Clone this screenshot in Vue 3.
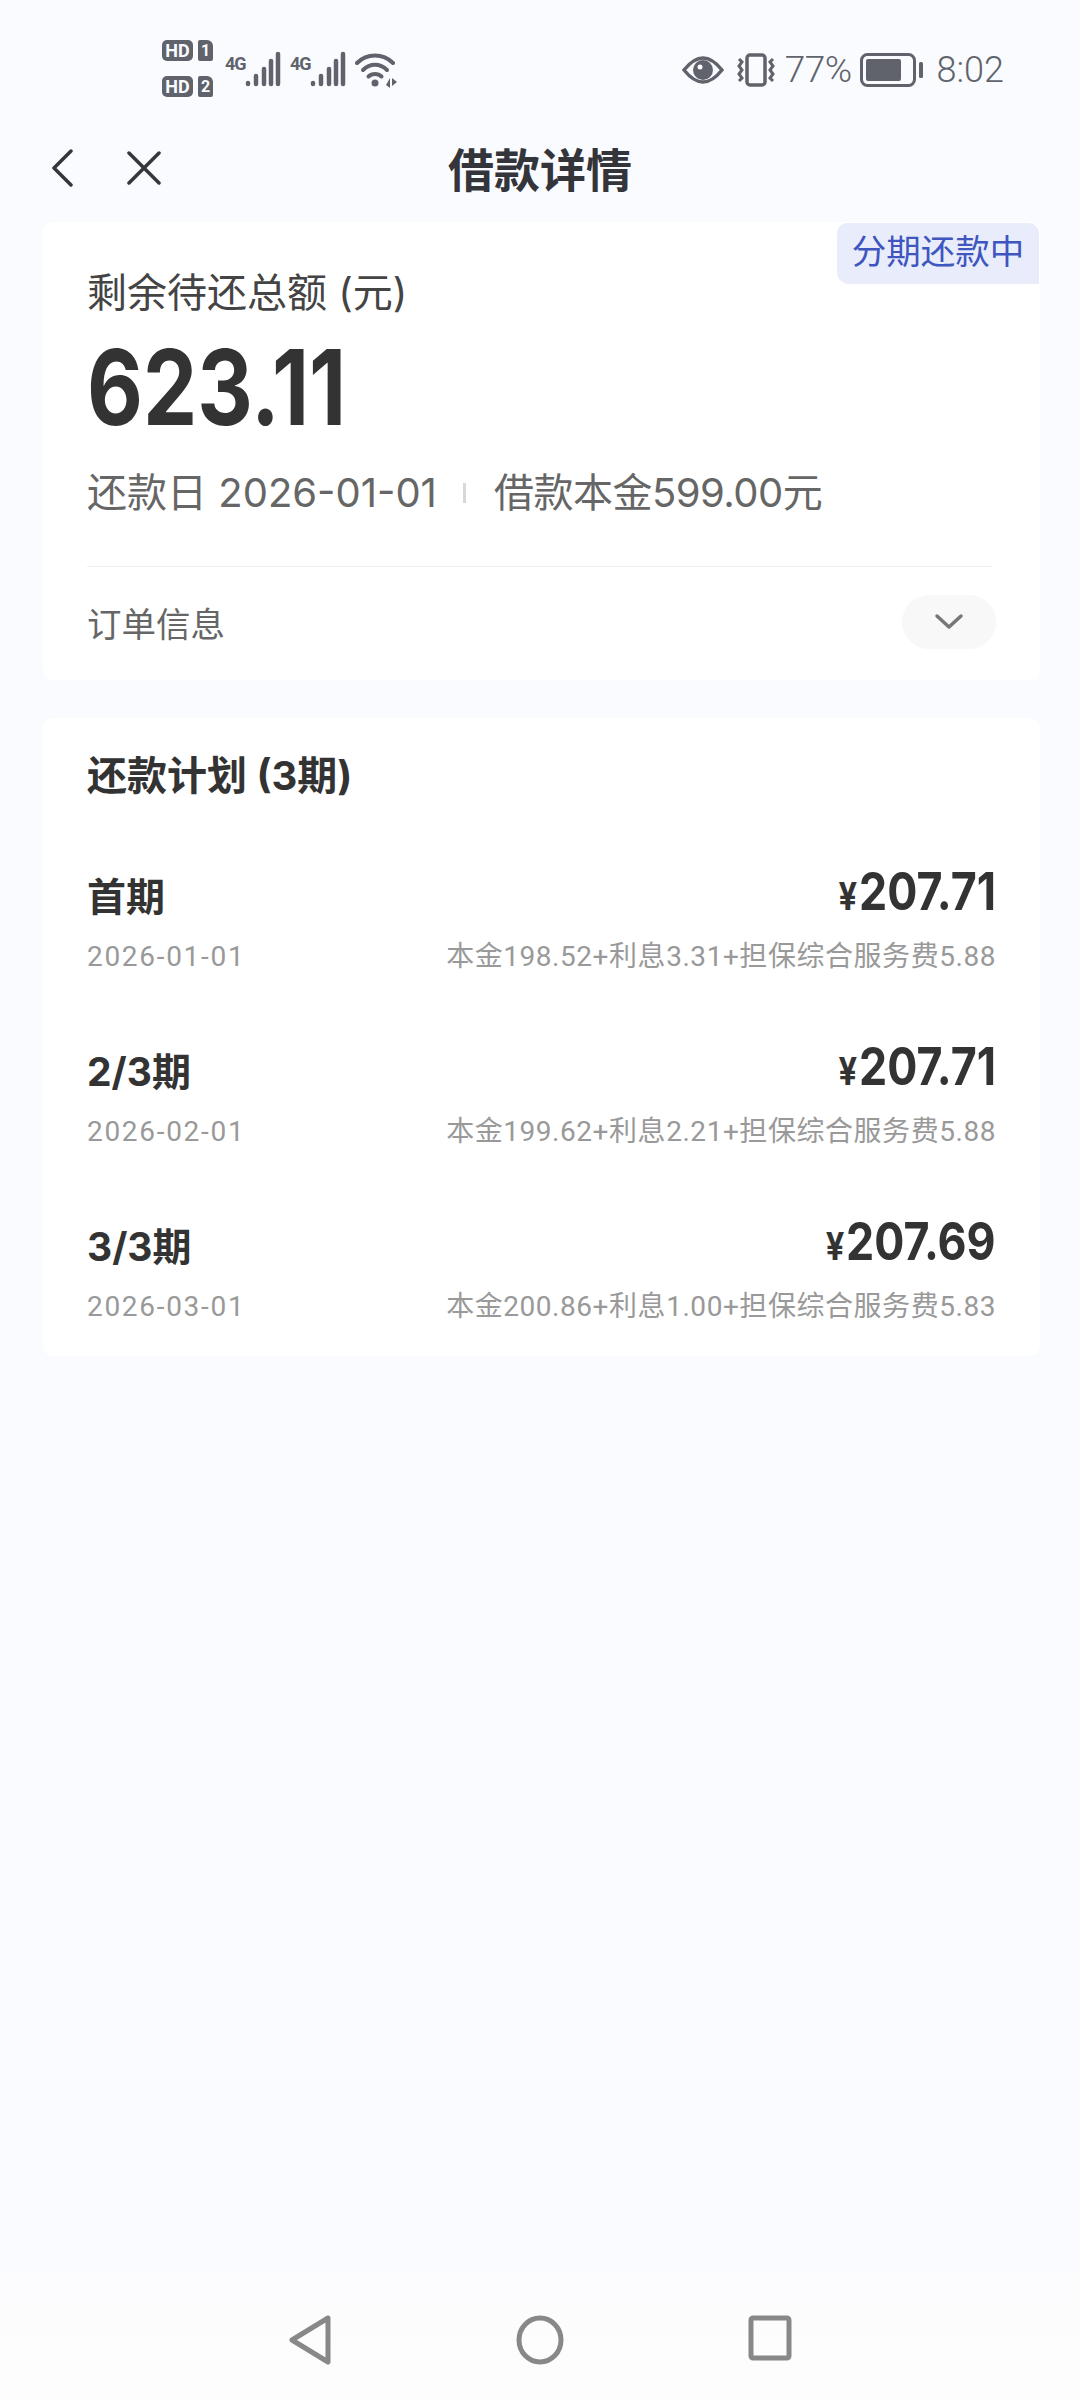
<template>
  <div class="page">
    <div class="status-bar">
      <div class="status-left">
        <div class="sims">
          <div class="sim" v-for="n in [1, 2]" :key="n">
            <span class="hd">HD</span>
            <span class="sim-no">{{ n }}</span>
          </div>
        </div>
        <div class="signal" v-for="n in 2" :key="n">
          <span class="net">4G</span>
          <svg width="36" height="36" viewBox="0 0 36 36">
            <g stroke="#60636b" stroke-linecap="round">
              <path d="M3 33v-1" stroke-width="4.5" />
              <path d="M11 33v-8" stroke-width="4.5" />
              <path d="M19 33v-15" stroke-width="4.5" />
              <path d="M26 33v-23" stroke-width="4.5" />
              <path d="M33 33v-30" stroke-width="4.5" />
            </g>
          </svg>
        </div>
        <svg class="wifi" width="44" height="36" viewBox="0 0 44 36">
          <g fill="none" stroke="#60636b" stroke-width="4" stroke-linecap="round">
            <path d="M2 11C12 1 28 1 38 11" />
            <path d="M8 18C15 11 25 11 32 18" />
            <path d="M13.500 24.500C17 21 23 21 26.500 24.500" />
          </g>
          <circle cx="20" cy="31" r="3.500" fill="#60636b" />
          <path d="M31 33l4-7v10zM37 26l5 4-5 4z" fill="#60636b" />
        </svg>
      </div>
      <div class="status-right">
        <svg width="42" height="28" viewBox="0 0 42 28">
          <path d="M2 14C10 4 16 2 21 2s11 2 19 12c-8 10-14 12-19 12S10 24 2 14z" fill="none" stroke="#60636b" stroke-width="3.500" />
          <circle cx="21" cy="14" r="10" fill="#60636b" />
          <circle cx="18" cy="11" r="2.500" fill="#fafbff" />
        </svg>
        <svg class="vibrate" width="40" height="34" viewBox="0 0 40 34">
          <rect x="11" y="2" width="18" height="30" rx="3" fill="none" stroke="#60636b" stroke-width="3.500" />
          <path d="M3 6l3 3-3 4 3 4-3 4 3 4-3 3M37 6l-3 3 3 4-3 4 3 4-3 4 3 3" fill="none" stroke="#60636b" stroke-width="3" />
        </svg>
        <span class="battery-text">77%</span>
        <svg class="battery" width="64" height="34" viewBox="0 0 64 34">
          <rect x="1.500" y="1.500" width="53" height="31" rx="6" fill="none" stroke="#60636b" stroke-width="3" />
          <rect x="6" y="6" width="35" height="22" rx="2" fill="#60636b" />
          <rect x="59" y="9" width="4" height="16" rx="1.500" fill="#60636b" />
        </svg>
        <span class="clock">8:02</span>
      </div>
    </div>

    <header class="nav-header">
      <div class="header-icons">
        <svg width="24" height="38" viewBox="0 0 24 38">
          <path d="M21 2L4 19l17 17" fill="none" stroke="#33363d" stroke-width="3.500" stroke-linecap="round" stroke-linejoin="round" />
        </svg>
        <svg width="34" height="34" viewBox="0 0 34 34">
          <path d="M2 2l30 30M32 2L2 32" fill="none" stroke="#33363d" stroke-width="3.500" stroke-linecap="round" />
        </svg>
      </div>
      <h1>借款详情</h1>
    </header>

    <section class="card summary">
      <span class="badge">分期还款中</span>
      <div class="summary-label">剩余待还总额 (元)</div>
      <div class="summary-amount"><span>623.11</span></div>
      <div class="summary-meta">
        <span>还款日 2026-01-01</span>
        <i class="meta-sep"></i>
        <span class="meta-principal">借款本金599.00元</span>
      </div>
      <div class="divider"></div>
      <div class="order-row">
        <span>订单信息</span>
        <span class="chevron-pill">
          <svg width="30" height="18" viewBox="0 0 30 18">
            <path d="M3 3l12 11L27 3" fill="none" stroke="#777" stroke-width="3.500" stroke-linecap="round" stroke-linejoin="round" />
          </svg>
        </span>
      </div>
    </section>

    <section class="card plan">
      <h2>还款计划 (3期)</h2>
      <div class="plan-row" v-for="item in plans" :key="item.date">
        <div class="plan-main">
          <span class="plan-title">{{ item.title }}</span>
          <span class="plan-amount"><small>¥</small>{{ item.amount }}</span>
        </div>
        <div class="plan-sub">
          <span class="plan-date">{{ item.date }}</span>
          <span class="plan-detail">{{ item.detail }}</span>
        </div>
      </div>
    </section>

    <footer class="system-nav">
      <svg width="44" height="52" viewBox="0 0 44 52">
        <path d="M40 4L4 26l36 22z" fill="none" stroke="#888" stroke-width="5" stroke-linejoin="round" />
      </svg>
      <svg width="48" height="52" viewBox="0 0 48 52">
        <ellipse cx="24" cy="26" rx="21" ry="22" fill="none" stroke="#888" stroke-width="5" />
      </svg>
      <svg width="44" height="48" viewBox="0 0 44 48">
        <rect x="3" y="4" width="38" height="40" rx="2" fill="none" stroke="#888" stroke-width="5" />
      </svg>
    </footer>
  </div>
</template>

<script setup>
const plans = [
  { title: '首期', amount: '207.71', date: '2026-01-01', detail: '本金198.52+利息3.31+担保综合服务费5.88' },
  { title: '2/3期', amount: '207.71', date: '2026-02-01', detail: '本金199.62+利息2.21+担保综合服务费5.88' },
  { title: '3/3期', amount: '207.69', date: '2026-03-01', detail: '本金200.86+利息1.00+担保综合服务费5.83' }
];
</script>

<style>
body {
  margin: 0;
  background: #fafbff;
}
</style>

<style scoped>
.page {
  min-height: 2400px;
  display: flex;
  flex-direction: column;
  background: #fafbff;
  color: #333;
  font-family: Inter, "Noto Sans CJK SC", sans-serif;
}

.status-bar {
  height: 134px;
  box-sizing: border-box;
  padding: 40px 76px 0 162px;
  display: flex;
  justify-content: space-between;
  align-items: flex-start;
  color: #60636b;
  font-family: Roboto, sans-serif;
}

.status-left,
.status-right {
  display: flex;
  align-items: center;
}

.sims {
  display: flex;
  flex-direction: column;
  gap: 15px;
  margin-right: 12px;
}

.sim {
  display: flex;
  gap: 5px;
}

.hd {
  width: 31px;
  height: 21px;
  border-radius: 5px;
  background: #60636b;
  color: #fafbff;
  font-size: 18px;
  line-height: 21px;
  font-weight: 700;
  text-align: center;
}

.sim-no {
  width: 15px;
  height: 21px;
  border-radius: 2px 6px 2px 2px;
  background: #60636b;
  color: #fafbff;
  font-size: 16px;
  line-height: 21px;
  font-weight: 700;
  text-align: center;
}

.signal {
  display: flex;
  align-items: flex-start;
  width: 65px;
  height: 38px;
  margin-top: 2px;
}

.net {
  width: 20px;
  padding-top: 3px;
  font-size: 18px;
  line-height: 20px;
  font-weight: 700;
  letter-spacing: -1px;
}

.wifi {
  margin-top: 2px;
}

.status-right {
  margin-top: 12px;
  height: 36px;
}

.vibrate {
  margin-left: 12px;
}

.battery-text {
  margin-left: 9px;
  font-size: 37px;
  line-height: 36px;
  font-weight: 300;
  letter-spacing: -0.5px;
}

.battery {
  margin-left: 8px;
}

.clock {
  margin-left: 13px;
  font-size: 36px;
  line-height: 36px;
  font-weight: 300;
}

.nav-header {
  height: 70px;
  margin-bottom: 18px;
  position: relative;
  display: flex;
  align-items: center;
  justify-content: center;
}

.header-icons {
  position: absolute;
  left: 50px;
  top: 15px;
  display: flex;
  align-items: center;
  gap: 53px;
}

.nav-header h1 {
  margin: 0;
  padding-top: 2px;
  font-size: 46px;
  line-height: 70px;
  font-weight: 700;
  color: #33353a;
}

.card {
  margin: 0 40px 0 43px;
  background: #fff;
  border-radius: 10px;
  box-sizing: border-box;
}

.summary {
  height: 458px;
  padding: 0 44px 0 44px;
  position: relative;
}

.badge {
  position: absolute;
  top: 1px;
  right: 1px;
  width: 202px;
  height: 61px;
  border-radius: 10px 10px 0 12px;
  background: #e9edfb;
  color: #3f55c0;
  font-size: 34.500px;
  line-height: 58px;
  text-align: center;
}

.summary-label {
  padding-top: 47px;
  font-size: 40px;
  line-height: 48px;
  color: #444;
}

.summary-amount {
  margin-top: 4px;
  height: 132px;
  line-height: 132px;
  font-size: 105px;
  font-weight: 700;
  color: #333;
}

.summary-amount span {
  display: inline-block;
  transform: scaleX(0.82);
  transform-origin: left center;
}

.summary-meta {
  margin-top: 12px;
  display: flex;
  align-items: center;
  font-size: 40px;
  line-height: 56px;
  color: #666;
}

.meta-sep {
  width: 3px;
  height: 20px;
  margin: 0 28px 0 26px;
  background: #d8d8d8;
}

.meta-principal {
  letter-spacing: -0.5px;
}

.divider {
  margin: 45px 4px 0 0;
  height: 1px;
  background: #f0f0f0;
}

.order-row {
  height: 110px;
  display: flex;
  justify-content: space-between;
  align-items: center;
  font-size: 34.500px;
  color: #666;
}

.chevron-pill {
  width: 94px;
  height: 54px;
  border-radius: 27px;
  background: #f8f8f8;
  display: flex;
  align-items: center;
  justify-content: center;
}

.plan {
  margin-top: 38px;
  height: 638px;
  padding: 32px 44px 0 44px;
}

.plan h2 {
  margin: 0 0 62px;
  font-size: 40px;
  line-height: 52px;
  font-weight: 700;
  color: #333;
}

.plan-row {
  height: 175px;
}

.plan-main {
  display: flex;
  justify-content: space-between;
  align-items: center;
  height: 60px;
}

.plan-title {
  font-size: 39px;
  line-height: 60px;
  font-weight: 700;
  padding-top: 6px;
}

.plan-amount {
  display: inline-block;
  font-size: 52px;
  line-height: 60px;
  font-weight: 700;
  transform: scaleX(0.86);
  transform-origin: right center;
}

.plan-amount small {
  font-size: 38px;
  margin-right: 2px;
}

.plan-sub {
  display: flex;
  justify-content: space-between;
  align-items: center;
  margin-top: 11px;
  font-family: Roboto, "Noto Sans CJK SC", sans-serif;
  font-size: 28px;
  line-height: 44px;
  color: #999;
}

.plan-date {
  letter-spacing: 1.7px;
}

.plan-detail {
  letter-spacing: 0.55px;
}

.system-nav {
  margin-top: auto;
  height: 128px;
  background: linear-gradient(#fcfcfe, #fdfdfd);
  display: flex;
  justify-content: center;
  align-items: flex-start;
  gap: 184px;
  padding-top: 42px;
  box-sizing: border-box;
}
</style>
